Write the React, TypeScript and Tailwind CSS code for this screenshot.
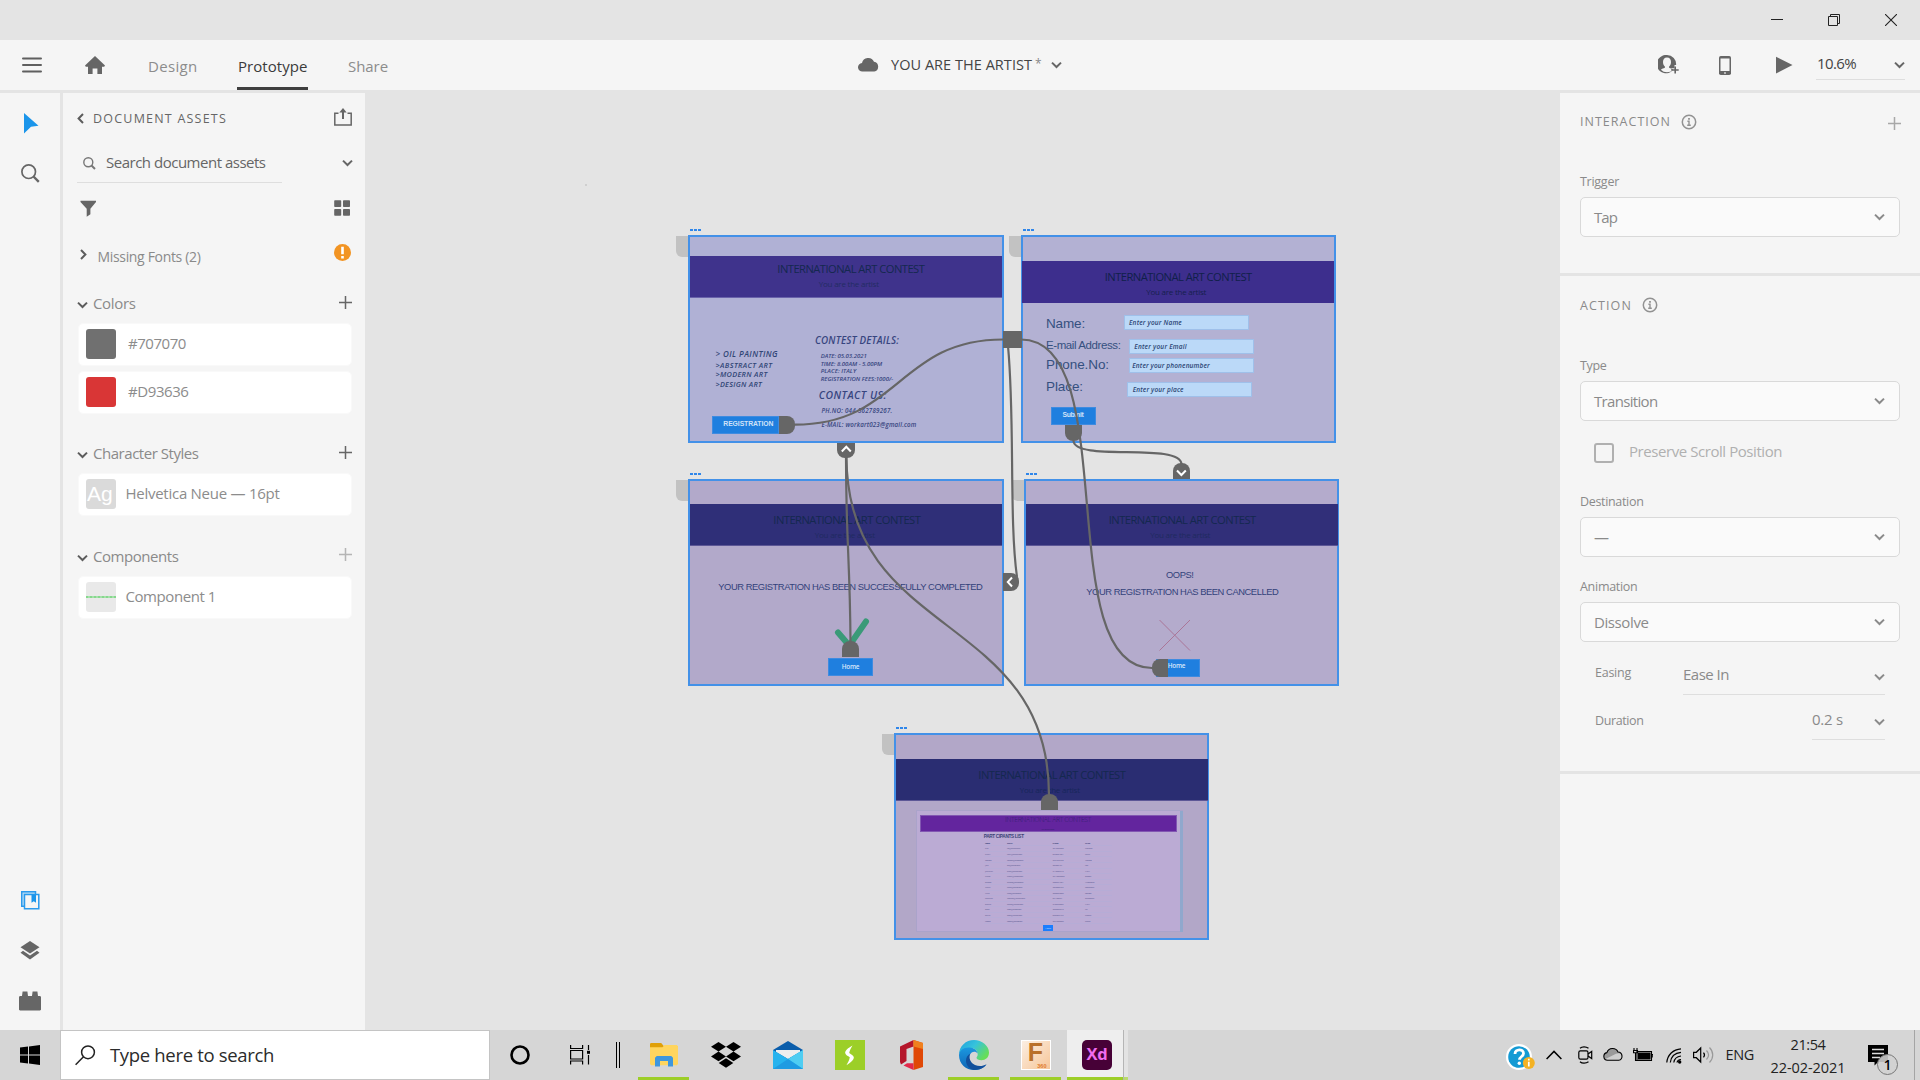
import { useLayoutEffect, useRef, useState, type ReactNode } from "react";

/* Text run whose tracking is measured so that it takes up exactly `w` pixels. */
function Fit({ w, className = "", children }: { w: number; className?: string; children: string }) {
  const ref = useRef<HTMLSpanElement>(null);
  const [ls, setLs] = useState(0);
  useLayoutEffect(() => {
    const el = ref.current;
    if (!el) return;
    el.style.letterSpacing = "0px";
    const natural = el.getBoundingClientRect().width;
    const value = (w - natural) / children.length;
    el.style.letterSpacing = `${value}px`;
    setLs(value);
  }, [w, children]);
  return (
    <span ref={ref} className={`inline-block whitespace-pre ${className}`} style={{ letterSpacing: ls }}>
      {children}
    </span>
  );
}

const Chevron = ({ className = "text-[#666]", dir = "down" }: { className?: string; dir?: "down" | "left" | "right" }) => {
  if (dir === "down")
    return (
      <svg width="11" height="8" viewBox="0 0 11 8" className={`shrink-0 ${className}`} fill="none" stroke="currentColor" strokeWidth="2">
        <path d="M1 1.6 5.5 6 10 1.6" />
      </svg>
    );
  return (
    <svg width="7" height="11" viewBox="0 0 7 11" className={`shrink-0 ${className}`} fill="none" stroke="currentColor" strokeWidth="2">
      <path d={dir === "left" ? "M6 1 1.6 5.5 6 10" : "M1 1 5.4 5.5 1 10"} />
    </svg>
  );
};

const Plus = ({ className }: { className: string }) => (
  <svg width="13" height="13" viewBox="0 0 13 13" className={`shrink-0 ${className}`} fill="none" stroke="currentColor" strokeWidth="1.5">
    <path d="M6.5 0v13M0 6.5h13" />
  </svg>
);

const Info = () => (
  <svg width="16" height="16" viewBox="0 0 16 16" className="shrink-0 text-[#929292]" fill="none" stroke="currentColor">
    <circle cx="8" cy="8" r="6.7" strokeWidth="1.5" />
    <path d="M8 4v1.8" strokeWidth="1.8" />
    <path d="M6.4 7.2H8v4.2M6.2 11.3h3.6" strokeWidth="1.4" />
  </svg>
);

/* ---------- top bars ---------- */

function TitleBar() {
  return (
    <div className="flex h-10 shrink-0 items-start justify-end gap-[45px] bg-[#e4e4e4] pt-3.5 pr-[23px] text-[#222]">
      <svg width="12" height="12" viewBox="0 0 12 12" stroke="currentColor"><path d="M0 5.5h12" /></svg>
      <svg width="12" height="12" viewBox="0 0 12 12" fill="none" stroke="currentColor">
        <path d="M.5 2.5h9v9h-9zM2.5 2.5v-2h9v9h-2" />
      </svg>
      <svg width="12" height="12" viewBox="0 0 12 12" stroke="currentColor" strokeWidth="1.1"><path d="M0 0l12 12M12 0 0 12" /></svg>
    </div>
  );
}

function Toolbar() {
  return (
    <div className="flex h-[50px] shrink-0 items-start bg-[#f5f5f5] text-[15px] leading-5">
      <div className="flex w-[858px] items-start">
        <svg width="20" height="18" viewBox="0 0 20 18" className="mt-4 ml-[22px] text-[#5f5f5f]" stroke="currentColor" strokeWidth="2" strokeLinecap="round">
          <path d="M1 2.6h18M1 9h18M1 15.4h18" />
        </svg>
        <svg width="20" height="18" viewBox="0 0 20 18" className="mt-4 ml-[43px] text-[#666]" fill="currentColor">
          <path d="M10 0 20 9.6l-.8 1.2H17V18h-4.6v-5.4H7.6V18H3v-7.2H.8L0 9.6z" />
        </svg>
        <div className="mt-4 ml-[43px] text-[#8c8c8c]"><Fit w={49.500}>Design</Fit></div>
        <div className="mt-4 ml-[39.500px] flex h-[34px] w-[71px] flex-col justify-between pl-px text-[#3a3a3a]">
          <Fit w={70.500}>Prototype</Fit>
          <div className="-ml-px h-[3px] bg-[#3f3f3f]" />
        </div>
        <div className="mt-4 ml-10 text-[#8c8c8c]"><Fit w={40}>Share</Fit></div>
      </div>
      <svg width="21" height="15" viewBox="0 0 21 15" className="mt-[17px] text-[#666]" fill="currentColor">
        <path d="M4.6 14.6A4.3 4.3 0 0 1 4 6a6.3 6.3 0 0 1 12-1.2 5 5 0 0 1 .3 9.8z" />
      </svg>
      <div className="mt-3.5 ml-3 text-[#444]"><Fit w={141} className="text-[14.500px]">YOU ARE THE ARTIST</Fit></div>
      <div className="mt-3.5 ml-[3px] w-[7px] text-[12px] text-[#888]">*</div>
      <div className="mt-[21px] ml-[9px]"><Chevron className="block text-[#666]" /></div>
      <div className="grow" />
      <svg width="21" height="20" viewBox="0 0 21 20" className="mt-[15px] text-[#666]">
        <path fill="currentColor" fillRule="evenodd" d="M9 0a9.2 9.2 0 0 1 9.1 10h-1.6v3.2h-3.2v2.4h1.2A9.2 9.2 0 1 1 9 0zM9 2.4C6.4 2.4 5 4.3 5 6.9c0 2 .8 3.6 1.9 4.6v1.3c-1.5.6-2.9 1-4 2a8.6 8.6 0 0 0 12.2 0c-1.1-1-2.5-1.4-4-2v-1.3C12.2 10.500 13 8.900 13 6.900c0-2.600-1.400-4.500-4-4.500z" />
        <path d="M17.200 11.500v7M13.700 15h7" stroke="currentColor" strokeWidth="1.600" />
      </svg>
      <svg width="12" height="19" viewBox="0 0 12 19" className="mt-4 ml-10 text-[#666]">
        <rect width="12" height="19" rx="1.800" fill="currentColor" />
        <rect x="1.500" y="2.500" width="9" height="12.500" fill="#f5f5f5" />
        <rect x="5.200" y="16.300" width="1.600" height="1.400" fill="#f5f5f5" />
      </svg>
      <svg width="17" height="18" viewBox="0 0 17 18" className="mt-4 ml-[45px] text-[#666]" fill="currentColor"><path d="M0 .8 16.500 9 0 17.500z" /></svg>
      <div className="mt-[13px] mr-[15px] ml-[23px] flex h-[27px] w-[89px] items-start justify-between border-b border-[#dedede] text-[#444]">
        <Fit w={40} className="pl-px">10.6%</Fit>
        <div className="pt-2"><Chevron className="block text-[#666]" /></div>
      </div>
    </div>
  );
}

/* ---------- left side ---------- */

function Rail() {
  return (
    <div className="flex w-[60px] shrink-0 flex-col bg-[#f5f5f5] text-[#666]">
      <svg width="15" height="21" viewBox="0 0 15 21" className="mt-5 ml-6" fill="#1b95ea"><path d="M0 0 14.500 12.700 7 13.700 0 20.500z" /></svg>
      <svg width="19" height="19" viewBox="0 0 19 19" className="mt-[30px] ml-[21px]" fill="none" stroke="currentColor">
        <circle cx="7.700" cy="7.700" r="6.800" strokeWidth="1.700" />
        <path d="m12.500 12.500 5.300 5.300" strokeWidth="2.400" />
      </svg>
      <div className="grow" />
      <svg width="19" height="19" viewBox="0 0 19 19" className="ml-[21px]" fill="none" stroke="#2a9aec" strokeWidth="1.500">
        <path d="M3.500 15.200H.7V.8h13.800v2.400" fill="#b5dbf6" />
        <path d="M3.500 3.500h14.300v14.300H3.500z" fill="#f5f5f5" />
        <path d="M10.500 3.500h4.500v8.300l-2.200-1.600-2.300 1.600z" fill="#1b95ea" stroke="none" />
      </svg>
      <svg width="20" height="19" viewBox="0 0 20 19" className="mt-[31px] ml-5" fill="currentColor">
        <path d="m10 0 9.500 6.200L10 12.500.500 6.200z" />
        <path d="m3 9.800 7 4.700 7-4.700 2.500 1.900L10 18.500.500 11.700z" />
      </svg>
      <svg width="22" height="20" viewBox="0 0 22 20" className="mt-[31px] mb-[19px] ml-[19px]" fill="currentColor">
        <path d="M3 5 3.600.6h4.800L9 5h4l.600-4.400h4.800L19 5h2l1 .8v13l-1 .7H1l-1-.7v-13L1 5z" />
      </svg>
    </div>
  );
}

function SectionHead({ label, w, dim = false }: { label: string; w: number; dim?: boolean }) {
  return (
    <div className="flex h-5 items-start">
      <Chevron className="mt-2 -ml-px text-[#5c5c5c]" />
      <Fit w={w} className="ml-[5px] text-[#8a8a8a]">{label}</Fit>
      <div className="grow" />
      <Plus className={dim ? "mt-[1.500px] mr-[.5px] text-[#b5b5b5]" : "mt-[2.500px] mr-[.5px] text-[#666]"} />
    </div>
  );
}

function Card({ swatch, label, w, gap }: { swatch: ReactNode; label: string; w: number; gap: string }) {
  return (
    <div className="flex h-[43px] items-start rounded-[5px] border border-[#f9f9f9] bg-white pt-[5px] pl-[7px] text-[#8c8c8c]">
      {swatch}
      <Fit w={w} className={`mt-1 ${gap}`}>{label}</Fit>
    </div>
  );
}

function AssetsPanel() {
  return (
    <div className="flex w-[302px] shrink-0 flex-col bg-[#f5f5f5] pr-[13px] pl-[15px] text-[15px] leading-5">
      <div className="mt-[15px] flex h-5 items-start">
        <Chevron dir="left" className="mt-[5px] -ml-px text-[#5c5c5c]" />
        <Fit w={134} className="mt-px ml-[9px] text-[12.500px] text-[#666]">DOCUMENT ASSETS</Fit>
        <div className="grow" />
        <svg width="18" height="18" viewBox="0 0 18 18" className="text-[#666]" fill="none" stroke="currentColor" strokeWidth="1.500">
          <path d="M4.500 5.200H.8v11.900h16.400V5.200h-3.700" />
          <path d="M9 11V3" strokeWidth="2" />
          <path d="M9 0 5.300 4.500h7.400z" fill="currentColor" stroke="none" />
        </svg>
      </div>
      <div className="mt-6 flex h-5 items-start">
        <svg width="13" height="13" viewBox="0 0 13 13" className="mt-[5px] ml-[5px] text-[#777]" fill="none" stroke="currentColor" strokeWidth="1.400">
          <circle cx="5.300" cy="5.300" r="4.500" />
          <path d="m8.500 8.500 3.500 3.500" strokeWidth="1.900" />
        </svg>
        <Fit w={159.500} className="ml-2.5 text-[#666]">Search document assets</Fit>
        <div className="grow" />
        <Chevron className="mt-[7px] -mr-px text-[#666]" />
      </div>
      <div className="mt-[10px] -ml-px h-px w-[205px] bg-[#dedede]" />
      <div className="mt-[17px] flex h-[17px] justify-between pr-0.5">
        <svg width="16" height="17" viewBox="0 0 16 17" className="ml-0.5 text-[#666]" fill="currentColor">
          <path d="M.5.8H16v1.300l-5.600 6.700v5.400l-3.700 2.600v-8L.500 2.100z" />
        </svg>
        <svg width="16" height="16" viewBox="0 0 16 16" className="text-[#666]" fill="currentColor">
          <rect x=".2" y=".3" width="7" height="6.700" rx=".8" /><rect x="9" y=".3" width="7" height="6.700" rx=".8" />
          <rect x=".2" y="9" width="7" height="6.700" rx=".8" /><rect x="9" y="9" width="7" height="6.700" rx=".8" />
        </svg>
      </div>
      <div className="mt-[27px] flex h-5 items-start">
        <Chevron dir="right" className="mt-[5px] ml-[1.500px] text-[#5c5c5c]" />
        <Fit w={103} className="mt-[2.500px] ml-[11px] text-[14px] text-[#8a8a8a]">Missing Fonts (2)</Fit>
        <div className="grow" />
        <svg width="17" height="17" viewBox="0 0 17 17" className="mr-px">
          <circle cx="8.500" cy="8.500" r="8.500" fill="#f29423" />
          <path d="M8.500 2.800v7.400M8.500 12v2.400" stroke="#fff" strokeWidth="2.600" />
        </svg>
      </div>
      <div className="mt-[29px]"><SectionHead label="Colors" w={42.500} /></div>
      <div className="mt-[10px] flex flex-col gap-[5px]">
        <Card swatch={<div className="size-[30px] rounded-[3px] bg-[#707070]" />} label="#707070" w={58} gap="ml-3" />
        <Card swatch={<div className="size-[30px] rounded-[3px] bg-[#d93636]" />} label="#D93636" w={60.500} gap="ml-3" />
      </div>
      <div className="mt-[29px]"><SectionHead label="Character Styles" w={105.500} /></div>
      <div className="mt-[10px]">
        <Card
          swatch={<div className="size-[30px] overflow-hidden rounded-[3px] bg-[#dadada] pl-px font-['Liberation_Sans',sans-serif] text-[21px] leading-[29px] text-white">Ag</div>}
          label="Helvetica Neue — 16pt" w={154} gap="ml-[9.500px]"
        />
      </div>
      <div className="mt-[30px]"><SectionHead label="Components" w={85.500} dim /></div>
      <div className="mt-[10px]">
        <Card
          swatch={<div className="flex size-[30px] items-center rounded-[3px] bg-[#e9e9e9]"><div className="w-full border-t-2 border-dotted border-[#86d88d] bg-[#a5e0aa]" /></div>}
          label="Component 1" w={90.500} gap="ml-[9.500px]"
        />
      </div>
    </div>
  );
}

/* ---------- right side ---------- */

function Field({ label, w, value, vw }: { label: string; w: number; value: string; vw: number }) {
  return (
    <div className="flex flex-col items-start">
      <Fit w={w} className="relative top-px text-[12.500px]">{label}</Fit>
      <div className="mt-1.5 flex h-10 w-80 items-center justify-between rounded-[5px] border border-[#d9d9d9] bg-[#fafafa] pr-3.5 pl-[13px]">
        <Fit w={vw}>{value}</Fit>
        <Chevron className="text-[#8a8a8a]" />
      </div>
    </div>
  );
}

function Inspector() {
  return (
    <div className="flex w-[360px] shrink-0 flex-col bg-[#f5f5f5] px-5 text-[15px] leading-5 text-[#8a8a8a]">
      <div className="mt-[18px] flex h-5 items-start">
        <Fit w={91} className="mt-px text-[12.500px]">INTERACTION</Fit>
        <div className="mt-[3px] ml-2.5"><Info /></div>
        <div className="grow" />
        <Plus className="mt-[5.500px] -mr-[.5px] text-[#a8a8a8]" />
      </div>
      <div className="mt-10"><Field label="Trigger" w={39} value="Tap" vw={23} /></div>
      <div className="-mx-5 mt-9 h-[3px] bg-[#e4e4e4]" />
      <div className="mt-[19px] flex h-5 items-start">
        <Fit w={52} className="mt-px text-[12.500px]">ACTION</Fit>
        <div className="mt-0.5 ml-2.5"><Info /></div>
      </div>
      <div className="mt-10"><Field label="Type" w={26.500} value="Transition" vw={63.500} /></div>
      <div className="mt-[22px] flex h-5 items-start pl-3.5">
        <div className="size-5 rounded-[3px] border-2 border-[#b0b0b0]" />
        <Fit w={153} className="-mt-0.5 ml-[15px] text-[#b0b0b0]">Preserve Scroll Position</Fit>
      </div>
      <div className="mt-7"><Field label="Destination" w={63.500} value="—" vw={15} /></div>
      <div className="mt-[19px]"><Field label="Animation" w={57.500} value="Dissolve" vw={54.500} /></div>
      <div className="mt-[22px] flex h-[31px] items-start justify-between pr-[15px] pl-[15px]">
        <Fit w={36} className="-mt-px text-[12.500px]">Easing</Fit>
        <div className="flex h-[31px] w-[202px] justify-between border-b border-[#dedede]">
          <Fit w={46}>Ease In</Fit>
          <Chevron className="mt-[9px] text-[#8a8a8a]" />
        </div>
      </div>
      <div className="mt-3.5 flex h-[31px] items-start justify-between pr-[15px] pl-[15px]">
        <Fit w={48.500} className="mt-0.5 text-[12.500px]">Duration</Fit>
        <div className="flex h-[31px] w-[73px] justify-between border-b border-[#dedede]">
          <Fit w={31}>0.2 s</Fit>
          <Chevron className="mt-[9px] text-[#8a8a8a]" />
        </div>
      </div>
      <div className="-mx-5 mt-[31px] h-[3px] bg-[#e4e4e4]" />
    </div>
  );
}

/* ---------- canvas ---------- */
/* Canvas items use window coordinates; the layer is shifted by the canvas origin. */

const SANS = "font-['Open_Sans','Noto_Sans',sans-serif]";
const ARIAL = "font-['Liberation_Sans',Arial,sans-serif]";

/* Text with its baseline at y. */
function Label({ x, y, w, size, className, children }: { x: number; y: number; w: number; size: number; className: string; children: string }) {
  return (
    <div className="absolute flex h-5 items-center leading-5" style={{ left: x, top: y - 9.5 - size * 0.385, fontSize: size }}>
      <Fit w={w} className={className}>{children}</Fit>
    </div>
  );
}

function Box({ x, y, w, h, className, children }: { x: number; y: number; w: number; h: number; className: string; children?: ReactNode }) {
  return (
    <div className={`absolute ${className}`} style={{ left: x, top: y, width: w, height: h }}>{children}</div>
  );
}

function Artboard({ x, y, w, h, className }: { x: number; y: number; w: number; h: number; className: string }) {
  return (
    <>
      <Box x={x - 12} y={y + 0.5} w={14} h={21} className="rounded-bl-[6px] bg-[#c2c2c2]" />
      <Box x={x} y={y} w={w} h={h} className={`border-2 border-[#4391e8] ${className}`} />
      <Box x={x + 2} y={y - 6} w={3} h={2} className="bg-[#2f86ea]" />
      <Box x={x + 6} y={y - 6} w={3} h={2} className="bg-[#2f86ea]" />
      <Box x={x + 10} y={y - 6} w={3} h={2} className="bg-[#2f86ea]" />
    </>
  );
}

function Heading({ x, y, dy = 14, tone = "text-[#14284f]", sub }: { x: number; y: number; dy?: number; tone?: string; sub: string }) {
  return (
    <>
      <Label x={x} y={y} w={147} size={11.2} className={`${SANS} ${tone}`}>INTERNATIONAL ART CONTEST</Label>
      <Label x={x + 41.5} y={y + dy} w={60} size={8} className={`${SANS} ${sub}`}>You are the artist</Label>
    </>
  );
}

const people: [string, string, string, string][] = [
  ["Name", "EMAIL", "PHONE", "PLACE"],
  ["Rio", "rio@gmail.com", "9847583920", "Chennai"],
  ["Ricky", "ricky@gmail.com", "8778684221", "Delhi"],
  ["Tamara", "tamara@gmail.com", "9754652103", "Mumbai"],
  ["Joe", "joe@gmail.com", "986387121", "USA"],
  ["Jennifer", "jenni@gmail.com", "7448926713", "Italy"],
  ["Lucas", "lucas1@gmail.com", "99442850238", "Europe"],
  ["Sundar", "sundar@gmail.com", "7386574921", "Hyderabad"],
  ["Kavin", "kavin@gmail.com", "9362880427", "Bangalore"],
  ["Mira", "mira@gmail.com", "9003529280", "London"],
  ["Danielle", "danielle@gmail.com", "874480571", "Singapore"],
  ["Emilia", "emilia@gmail.com", "9487692225", "Italy"],
  ["Edge", "edge@gmail.com", "9889296213", "UK"],
  ["Sofia", "sofia@gmail.com", "8907366477", "France"],
  ["Naomi", "naomi@gmail.com", "9871388330", "Dubai"],
];

const details = `${SANS} font-semibold italic text-[#37457f]`;
const list = `${SANS} font-semibold italic text-[#304676]`;
const field = "border border-[#9fc0ea] bg-[#bbd9f8]";
const button = "border border-[#3f8be0] bg-[#1f7fdf]";
const handle = "bg-[#666]";
const formLabel = `${ARIAL} text-[#35507f]`;
const placeholder = `${SANS} font-semibold italic text-[#2c4573]`;
const buttonText = `${ARIAL} font-bold text-[#cfe2f8]`;
const notice = `${ARIAL} text-[#33427a]`;

function Canvas() {
  return (
    <div className="relative min-w-0 grow overflow-hidden bg-[#e4e4e4]">
      <div className="absolute -top-[93px] -left-[365px] h-[1080px] w-[1920px]">
        <Box x={585} y={184} w={2} h={2} className="bg-[#cfcfcf]" />

        {/* landing page */}
        <Artboard x={688} y={235} w={316} h={208} className="bg-[#b0b1d5]" />
        <Box x={690} y={256} w={312} h={42} className="border-b border-[#6a63ab] bg-[#3f338c]" />
        <Heading x={777.3} y={273} dy={13.3} sub="text-[#232c63]" />
        <Label x={815} y={344} w={84} size={9.8} className={details}>CONTEST DETAILS:</Label>
        <Label x={820.7} y={358} w={46} size={6} className={details}>DATE: 05.03.2021</Label>
        <Label x={820.7} y={366} w={61.5} size={6} className={details}>TIME: 8.00AM - 5.00PM</Label>
        <Label x={820.7} y={373} w={35.5} size={6} className={details}>PLACE: ITALY</Label>
        <Label x={820.7} y={380.7} w={72.5} size={6} className={details}>REGISTRATION FEES:1000/-</Label>
        <Label x={818.7} y={399} w={68} size={10.4} className={details}>CONTACT US:</Label>
        <Label x={821.5} y={412.7} w={71} size={6.2} className={details}>PH.NO: 044-562789267.</Label>
        <Label x={821.5} y={426.7} w={95} size={6.2} className={details}>E-MAIL: workart023@gmail.com</Label>
        <Label x={715.5} y={357} w={62.5} size={8} className={list}>{"> OIL PAINTING"}</Label>
        <Label x={715.5} y={367} w={57} size={7.3} className={list}>{">ABSTRACT ART"}</Label>
        <Label x={715.5} y={376} w={52} size={7.3} className={list}>{">MODERN ART"}</Label>
        <Label x={715.5} y={386.3} w={46.5} size={7.3} className={list}>{">DESIGN ART"}</Label>
        <Box x={712} y={416} w={67} h={18} className={button} />
        <Label x={723.3} y={426.6} w={50} size={6.8} className={buttonText}>REGISTRATION</Label>

        {/* registration form */}
        <Artboard x={1020.500} y={235} w={315} h={208} className="bg-[#b3b1d3]" />
        <Box x={1022} y={261} w={312} h={42} className="bg-[#3d2e8d]" />
        <Heading x={1104.7} y={281} tone="text-[#10204a]" sub="text-[#16204e]" />
        <Label x={1046} y={329} w={39} size={13.5} className={formLabel}>Name:</Label>
        <Label x={1046} y={349} w={74.5} size={11.5} className={formLabel}>E-mail Address:</Label>
        <Label x={1046} y={370} w={63} size={13.5} className={formLabel}>Phone.No:</Label>
        <Label x={1046} y={392} w={37} size={13.5} className={formLabel}>Place:</Label>
        <Box x={1123.5} y={314.5} w={125} h={15} className={field} />
        <Box x={1129} y={339} w={125} h={15} className={field} />
        <Box x={1129} y={358} w={125} h={15} className={field} />
        <Box x={1126.5} y={382} w={125} h={15} className={field} />
        <Label x={1129} y={324.8} w={53} size={6.5} className={placeholder}>Enter your Name</Label>
        <Label x={1134.3} y={348.8} w={52.5} size={6.5} className={placeholder}>Enter your Email</Label>
        <Label x={1132.3} y={368} w={77.5} size={6.5} className={placeholder}>Enter your phonenumber</Label>
        <Label x={1132.7} y={392} w={51} size={6.5} className={placeholder}>Enter your place</Label>
        <Box x={1051} y={407} w={45} h={18} className={button} />
        <Label x={1062.5} y={417.6} w={21} size={6.8} className={buttonText}>Submit</Label>

        {/* success page */}
        <Artboard x={688} y={479} w={316} h={207} className="bg-[#b2a9ca]" />
        <Box x={690} y={504} w={312} h={42} className="border-b border-[#5d5796] bg-[#2f2f78]" />
        <Heading x={773.3} y={524} sub="text-[#1f2a60]" />
        <Label x={718.3} y={590} w={264} size={9.4} className={notice}>YOUR REGISTRATION HAS BEEN SUCCESSFULLY COMPLETED</Label>
        <Box x={828} y={657.5} w={44.5} h={18.5} className={button} />
        <Label x={841.7} y={668.6} w={17.5} size={6.4} className={`${SANS} font-semibold text-[#d8e8fb]`}>Home</Label>

        {/* cancelled page */}
        <Artboard x={1024} y={479} w={315} h={207} className="bg-[#b4abcc]" />
        <Box x={1026} y={504} w={312} h={42} className="border-b border-[#5d5796] bg-[#312f79]" />
        <Heading x={1108.7} y={524} sub="text-[#1f2a60]" />
        <Label x={1166} y={578} w={27.5} size={9.4} className={notice}>OOPS!</Label>
        <Label x={1086.3} y={595} w={192} size={9.4} className={notice}>YOUR REGISTRATION HAS BEEN CANCELLED</Label>
        <Box x={1156} y={658.5} w={44} h={18.5} className={button} />
        <Label x={1167.7} y={667.6} w={17.5} size={6.4} className={`${SANS} font-semibold text-[#d8e8fb]`}>Home</Label>

        {/* participants page */}
        <Artboard x={894} y={733} w={315} h={207} className="bg-[#b2a7c8]" />
        <Box x={896} y={758.5} w={312} h={42.5} className="border-b border-[#5d5796] bg-[#2a2d72]" />
        <Heading x={978.3} y={779} sub="text-[#17265a]" />
        <Box x={915.5} y={809.5} w={267} h={122} className="border border-[#aaa3ca] bg-[#bbabd4]" />
        <Box x={1180} y={811} w={2.5} h={121} className="bg-[#90a8cd]" />
        <Box x={919.5} y={815} w={257} h={17} className="border border-[#8257b2] bg-[#63259e]" />
        <Label x={1005} y={822} w={86} size={6.8} className={`${SANS} font-light text-[#34206f]`}>INTERNATIONAL ART CONTEST</Label>
        <Label x={1041} y={830.3} w={13} size={2} className={`${SANS} text-[#34206f]`}>You are the artist</Label>
        <Label x={983.7} y={838} w={40} size={4.700} className={`${ARIAL} font-bold text-[#3b4478]`}>PART CIPANTS LIST</Label>
        {people.map((row, i) => {
          const y = 843.3 + i * 5.55;
          const tone = i === 0 ? `${SANS} font-bold text-[#4a4f85]` : `${SANS} text-[#5f5e96]`;
          return (
            <div key={row[1]}>
              <Label x={985} y={y} w={row[0].length * 0.85 + 1} size={2.4} className={tone}>{row[0]}</Label>
              <Label x={1007} y={y} w={row[1].length * 0.97 + 0.5} size={2.4} className={tone}>{row[1]}</Label>
              <Label x={1052.5} y={y} w={row[2].length * 1.02 + 0.5} size={2.4} className={tone}>{row[2]}</Label>
              <Label x={1085} y={y} w={row[3].length} size={2.4} className={tone}>{row[3]}</Label>
              <Box x={984} y={y + 2} w={128} h={1} className="bg-[#aeb0da]/40" />
            </div>
          );
        })}
        <Box x={1042.5} y={925} w={10.5} h={6} className="bg-[#1c7dfd]" />
        <Label x={1045.3} y={928.600} w={5.5} size={2.4} className={`${SANS} text-[#bcd8ff]`}>Home</Label>

        {/* wires and marks */}
        <svg className="absolute inset-0" width="1920" height="1080" fill="none">
          <path d="m838 632.500 11.300 13 16.700-24" stroke="#3a9a78" strokeWidth="6" strokeLinecap="round" />
          <path d="m1159.500 620 30.500 30.500M1190 620l-30.500 30.500" stroke="#aa7698" />
          <g stroke="#666" strokeWidth="2.200">
            <path d="M795 424.700C899 424.700 899 339.500 1003 339.500" />
            <path d="M1021 339.500C1124 339.500 1050 668 1152 668" />
            <path d="M1008 346C1015 420 1009 520 1017 577" />
            <path d="M1073.500 441c1.500 21 106.500 1 108 23" />
            <path d="M846 457c0 83 4 103 4.500 185" />
            <path d="M846.500 457C846.500 640 1049 612 1049 795" />
          </g>
        </svg>

        <Box x={1002.5} y={330.5} w={19} h={17.5} className={handle} />
        <Box x={779} y={416} w={16} h={17.8} className={`rounded-r-[8px] ${handle}`} />
        <Box x={1065} y={425.3} w={17} h={16} className={`rounded-b-[8px] ${handle}`} />
        <Box x={841.7} y={641.3} w={17.3} h={16} className={`rounded-t-[8px] ${handle}`} />
        <Box x={1151.7} y={659} w={16} h={17.7} className={`rounded-l-[8px] ${handle}`} />
        <Box x={1040.5} y={793.7} w={17.5} h={16.3} className={`rounded-t-[8px] ${handle}`} />
        <Box x={837.3} y={442.5} w={17.7} h={15.7} className={`rounded-b-[8px] ${handle}`} />
        <Box x={1172.7} y={463.3} w={17.3} h={16} className={`rounded-t-[8px] ${handle}`} />
        <Box x={1002.7} y={573.3} w={16.3} h={17.7} className={`rounded-r-[8px] ${handle}`} />
        <svg className="absolute inset-0" width="1920" height="1080" fill="none" stroke="#fff" strokeWidth="2">
          <path d="m841.800 451.500 4.500-4.700 4.500 4.700M1177 470.500l4.400 4.500 4.400-4.500M1012 577.500l-4.200 4.500 4.200 4.500" />
        </svg>
      </div>
    </div>
  );
}

/* ---------- taskbar ---------- */

function TaskbarItem({ wide = false, active = false, children }: { wide?: boolean; active?: boolean; children: ReactNode }) {
  return (
    <div className={`flex h-[50px] shrink-0 flex-col items-center ${wide ? "w-[56px]" : "w-[51px]"}`}>
      <div className="flex h-[47px] items-center pt-0.5">{children}</div>
      <div className={`h-[3px] w-full ${active ? "bg-[#9dce28]" : ""}`} />
    </div>
  );
}

function Taskbar() {
  return (
    <div className="flex h-[50px] shrink-0 items-start overflow-hidden bg-[#d6d6d6] text-black">
      <svg width="20" height="20" viewBox="0 0 20 20" className="mt-[15px] ml-5" fill="currentColor">
        <path d="M0 2.600 8 1.500v8H0zM9 1.400 20 0v9.500H9zM0 10.500h8v8L0 17.400zM9 10.500h11V20L9 18.600z" />
      </svg>
      <div className="ml-5 flex h-[50px] w-[430px] border border-[#c4c4c4] bg-white">
        <svg width="21" height="21" viewBox="0 0 21 21" className="mt-3.5 ml-3.5" fill="none" stroke="#222" strokeWidth="1.500">
          <circle cx="13" cy="7.300" r="6.400" />
          <path d="M8.500 11.800.600 19.800" />
        </svg>
        <Fit w={164} className="mt-[11px] ml-3.5 text-[18.500px] leading-[26px] text-[#2b2b2b]">Type here to search</Fit>
      </div>
      <svg width="20" height="20" viewBox="0 0 20 20" className="mt-[15px] ml-5" fill="none" stroke="currentColor" strokeWidth="2.600"><circle cx="10" cy="10" r="8.500" /></svg>
      <svg width="20" height="20" viewBox="0 0 20 20" className="mt-[15px] ml-10" fill="none" stroke="currentColor" strokeWidth="1.200">
        <path d="M.6 0v3.500h12V0M.6 5.500h12v8.500H.6zM.6 19.500V16h12v3.500M18.500 0v5M18.500 10v9.500" />
        <path d="M17 5.800h3v3h-3z" fill="currentColor" stroke="none" />
      </svg>
      <div className="mt-3 ml-[26px] h-[26px] w-1 border-x border-black" />
      <div className="ml-[18px] flex gap-[11px]">
        <TaskbarItem active>
          <svg width="28" height="24" viewBox="0 0 28 24">
            <path d="M0 1.200Q0 0 1.200 0h10l2.500 3H28v10H0z" fill="#e0a008" />
            <path d="M0 4.200h12.500L14.500 2H26.800L28 3.200V21l-1.200 1.200H1.200L0 21z" fill="#ffd55e" />
            <path d="M5 23.500v-8.800L6.800 13h14.400l1.800 1.700v8.800h-5V18h-8v5.500z" fill="#3f97dd" />
          </svg>
        </TaskbarItem>
        <TaskbarItem>
          <svg width="30" height="26" viewBox="0 0 30 26" fill="#000">
            <path d="m7.500 0 7.500 4.800-7.500 4.800L0 4.800zM22.500 0 30 4.800l-7.500 4.800L15 4.800zM7.500 9.600l7.500 4.800-7.500 4.800L0 14.400zM22.500 9.600l7.500 4.800-7.500 4.800-7.500-4.800zM15 16.300l7.300 4.700-7.300 4.700L7.700 21z" />
          </svg>
        </TaskbarItem>
        <TaskbarItem>
          <svg width="30" height="28" viewBox="0 0 30 28">
            <path d="M0 9 15 0l15 9v19H0z" fill="#0a5dab" />
            <path d="M3 9h24v2L15 18 3 11z" fill="#eee" />
            <path d="m0 9 15 9L30 9v19H0z" fill="#27b3ee" />
            <path d="m3 9.500 12 8 12-8z" fill="#eee" />
            <path d="m30 9-15 9 15 10z" fill="#4fcdf2" />
            <path d="M0 28 15 18l15 10z" fill="#1f9be2" />
          </svg>
        </TaskbarItem>
        <TaskbarItem>
          <svg width="30" height="30" viewBox="0 0 30 30">
            <path d="M0 0h30v30H0z" fill="#9ccf28" />
            <path d="M17.500 5.500C13 8 10 10.500 10.200 13c.2 2 2.800 3 4.600 4.300-.5 3-2 5.500-3.300 8 4-2.500 7.500-5.300 7.300-8-.2-2-2.800-3-4.600-4.300.5-3 2-5 3.300-7.500z" fill="#fff" />
          </svg>
        </TaskbarItem>
        <TaskbarItem>
          <svg width="23" height="30" viewBox="0 0 23 30">
            <path d="M0 6.500 13.500 0v6.500L6.500 9v12L1 24.500 0 22z" fill="#b5162b" />
            <path d="M13.500 0 23 3v24l-9.500 3z" fill="#e04806" />
            <path d="M13.500 0 23 3v6l-9.500-2.500z" fill="#f0801e" />
            <path d="m3.500 25.500 3.500-2.200h6.500V30z" fill="#e2294b" />
          </svg>
        </TaskbarItem>
        <TaskbarItem active>
          <svg width="30" height="30" viewBox="0 0 30 30">
            <defs>
              <linearGradient id="edgeTop" x1="0" y1="0" x2="1" y2=".6"><stop offset="0" stopColor="#1f9fdd" /><stop offset=".5" stopColor="#36c3dc" /><stop offset="1" stopColor="#66de58" /></linearGradient>
              <linearGradient id="edgeSide" x1="0" y1="0" x2="0" y2="1"><stop offset="0" stopColor="#1b98e0" /><stop offset="1" stopColor="#0f65b5" /></linearGradient>
            </defs>
            <path d="M0 15C0 6 7 0 15 0s15 6 15 12.500c0 5-3.500 7.700-7.500 7.700-3 0-5-1.200-5-2.400 0-1 1.200-1.300 1.200-3.600C18.700 11 16 8 11.500 8 5 8 .500 12 0 15z" fill="url(#edgeTop)" />
            <path d="M0 15c.5-5 5-8 10.500-7.500 4.500.2 7.500 2.800 8.200 6-1.500-2-4-2.500-6-1C9 15 9 22 15 25.500c4 2.300 9 1.500 12.500-1C25 28 20.500 30 15 30 7 30 0 24 0 15z" fill="url(#edgeSide)" />
            <path d="M11.500 13.500c-2.500 4 0 9.500 4.500 11.500 4 1.800 8 1.300 11.500-.7C25 28 20.500 30 15 30c-5-1-8-5-8-9.500 0-3 1.800-5.800 4.500-7z" fill="#114f9c" />
          </svg>
        </TaskbarItem>
        <TaskbarItem active>
          <div className="flex size-[30px] flex-col items-center border border-white bg-linear-to-br from-[#fbeee2] to-[#f6c698] font-['Liberation_Sans',sans-serif] font-bold">
            <div className="h-[23px] text-[25px] leading-[23px] text-[#b9702b]">F</div>
            <div className="mr-[3px] self-end text-[5.500px] leading-[5px] text-[#e07a2c]">360</div>
          </div>
        </TaskbarItem>
      </div>
      <div className="ml-1.5 flex bg-[#eeeeee]">
        <TaskbarItem wide active>
          <div className="mr-[-4px] flex size-[30px] items-center justify-center rounded-[5px] bg-[#470137] font-['Open_Sans',sans-serif] text-[16.500px] font-bold text-[#f06cf0]"><Fit w={21}>Xd</Fit></div>
        </TaskbarItem>
      </div>
      <div className="flex h-[50px] w-[5px] flex-col justify-end border-l border-[#b5b5b5] bg-[#e3e3e3]"><div className="h-[3px] bg-[#b9da6e]" /></div>
      <div className="grow" />
      <svg width="29" height="28" viewBox="0 0 29 28" className="mt-3.5">
        <circle cx="13" cy="13" r="13" fill="#fff" />
        <circle cx="13" cy="13" r="10.800" fill="#149ad4" />
        <path d="M9 10c0-5.500 8.500-5.500 8.500-.5 0 3-4 3-4 6.300" fill="none" stroke="#fff" strokeWidth="2.800" />
        <circle cx="13.300" cy="19.300" r="1.700" fill="#fff" />
        <circle cx="22.800" cy="19" r="6" fill="#f4b223" />
        <path d="M22.800 17.800v4.700M22.800 14.800v1.700" stroke="#fff" strokeWidth="1.700" />
      </svg>
      <svg width="16" height="10" viewBox="0 0 16 10" className="mt-5 ml-[11px]" fill="none" stroke="currentColor" strokeWidth="1.500"><path d="M.6 9 8 1.400 15.400 9" /></svg>
      <svg width="15" height="18" viewBox="0 0 15 18" className="mt-4 ml-4" fill="none" stroke="currentColor" strokeWidth="1.200">
        <rect x=".8" y="4.800" width="9.200" height="8.400" rx="1.600" />
        <path d="M10 8l3.700-2.500v7L10 10M2 2.200C4 .3 8 .3 10.500 2.200M2 15.800c2 1.800 6 1.800 8.500 0" />
      </svg>
      <svg width="20" height="14" viewBox="0 0 20 14" className="mt-[17px] ml-[10px]" stroke="currentColor" strokeWidth="1.100">
        <path d="M4.500 13.300a3.900 3.900 0 0 1-.6-7.700A6 6 0 0 1 15 5a4.200 4.200 0 0 1 .7 8.300z" fill="#9a9a9a" stroke="none" />
        <path d="M2 12.300 13 6.800c3-1.300 6-.3 6 2.700-.3 2.500-2 3.800-3.500 3.800h-11z" fill="#cfcfcf" stroke="none" />
        <path d="M4.500 13.300a3.900 3.900 0 0 1-.6-7.700A6 6 0 0 1 15 5a4.200 4.200 0 0 1 .7 8.300z" fill="none" />
      </svg>
      <svg width="20" height="14" viewBox="0 0 20 14" className="mt-[18px] ml-2.5" fill="none" stroke="currentColor" strokeWidth="1.100">
        <path d="M4 3.500h14.500v9H4zM18.500 6.500h1.300v3" />
        <path d="M5.500 5h11.500v6H5.500z" fill="currentColor" />
        <path d="M1 0v2.500M4 0v2.500M.5 2.500h4v2.200h-4zM2.500 5v7.500H4" />
      </svg>
      <svg width="16" height="16" viewBox="0 0 16 16" className="mt-[18px] ml-[13px]" fill="none" stroke="currentColor" strokeWidth="1.200">
        <path d="M.8 14.500C1.500 7 7 1.300 15 .8M4.300 14.500C5 9 9 5 15 4.400M7.800 14.500c.5-3.500 3-6 7.200-6.500M11 14.500c.3-1.500 1.500-2.800 4-3" />
        <circle cx="13.700" cy="14" r="1.700" fill="currentColor" stroke="none" />
      </svg>
      <svg width="21" height="18" viewBox="0 0 21 18" className="mt-4 ml-[11px]" fill="none" stroke="currentColor" strokeWidth="1.200">
        <path d="M.600 6.300h2.700L7.700 2v14l-4.400-4.300H.600zM10.500 6.700c1.300 1.500 1.300 3.100 0 4.600" />
        <path d="M13.500 4.500c2.600 2.800 2.600 6.200 0 9M16.500 1.500c4.300 4.500 4.300 10.500 0 15" stroke="#999" />
      </svg>
      <Fit w={28.500} className="mt-[15px] ml-3 text-[14.500px] leading-5 text-[#222]">ENG</Fit>
      <div className="mt-[3px] ml-[16px] flex w-[76px] flex-col items-center text-[14.500px] leading-[23px] text-[#222]">
        <Fit w={35}>21:54</Fit>
        <Fit w={75}>22-02-2021</Fit>
      </div>
      <svg width="31" height="31" viewBox="0 0 31 31" className="mt-[15px] ml-[22px]">
        <path d="M0 0h20v17H10l-3.500 3.500V17H0z" fill="#000" />
        <path d="M4 4.500h12M4 8.500h12M4 12.500h8" stroke="#ddd" strokeWidth="1.300" />
        <circle cx="19.500" cy="19.500" r="10" fill="#d2d2d2" fillOpacity=".88" stroke="#777" />
        <text x="19.500" y="24.600" textAnchor="middle" fontSize="13.500" fontWeight="600" fontFamily="Open Sans, sans-serif" fill="#000">1</text>
      </svg>
      <div className="mr-[5px] ml-[15px] h-[50px] w-px bg-[#a5a5a5]" />
    </div>
  );
}

export default function App() {
  return (
    <div className="flex h-[1080px] w-[1920px] flex-col overflow-hidden bg-[#e4e4e4] font-['Open_Sans','Noto_Sans',sans-serif]">
      <TitleBar />
      <Toolbar />
      <div className="flex min-h-0 grow pt-[3px]">
        <Rail />
        <div className="w-[3px] shrink-0" />
        <AssetsPanel />
        <Canvas />
        <Inspector />
      </div>
      <Taskbar />
    </div>
  );
}
